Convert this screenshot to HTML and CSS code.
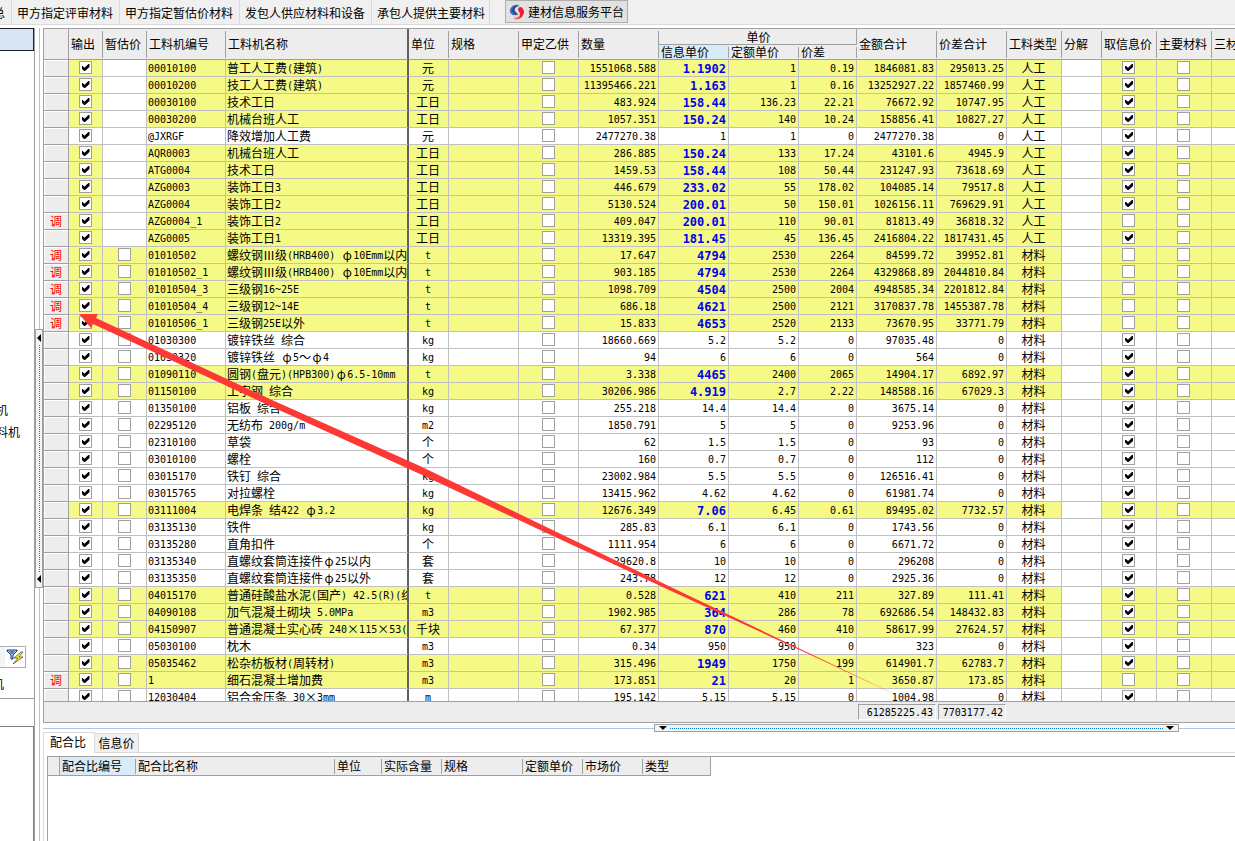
FILE: index.html
```html
<!DOCTYPE html>
<html lang="zh-CN">
<head>
<meta charset="utf-8">
<title>工料机汇总</title>
<link rel="stylesheet" href="styles.css">
</head>
<body>
<nav class="topbar">
  <a class="toptab toptab-first" href="#">总</a>
  <a class="toptab" href="#">甲方指定评审材料</a>
  <a class="toptab" href="#">甲方指定暂估价材料</a>
  <a class="toptab" href="#">发包人供应材料和设备</a>
  <a class="toptab toptab-last" href="#">承包人提供主要材料</a>
  <button class="platform" type="button">
    <svg width="16" height="18" viewBox="0 0 16 18" aria-hidden="true">
      <path d="M10 2C5 1 1 4 1 8C1 11 4 13 8 12C5 10 4 8 5 6C6 4 8 3 10 2Z" fill="#3a68b5"/>
      <path d="M11 3C7 3 5 6 6 8C7 10 9 10 9 12C6 12 4 10 3 8C3 5 6 2 11 3Z" fill="#274c98"/>
      <path d="M12 4C15 6 16 9 14 12C13 15 9 17 5 16C9 15 11 13 11 11C11 9 9 8 9 7C9 5 10 4 12 4Z" fill="#ee1c2c"/>
      <path d="M4 14C7 15 10 14 11 12C11 15 8 17 4 14Z" fill="#f58a86"/>
    </svg>
    建材信息服务平台
  </button>
</nav>
<div class="workspace">
  <aside class="side">
    <div class="side-tree">
      <div class="side-selected"></div>
      <ul class="side-list">
        <li>机</li>
        <li>料机</li>
      </ul>
      <div class="side-filter">
        <button class="filter" type="button" aria-label="筛选">
          <svg width="18" height="18" viewBox="0 0 18 18" aria-hidden="true">
            <path d="M1 2H11V3L7 7V11H5V7L1 3Z" fill="#b7d0ef" stroke="#18327c"/>
            <path d="M3 3H9L7 6H5Z" fill="#537dbd"/>
            <path d="M15 4 8 10 12 10 7 16 17 9 13 9 17 4Z" fill="#ffef00" stroke="#35405e" stroke-width=".7"/>
          </svg>
        </button>
      </div>
      <div class="side-tail">机</div>
    </div>
    <div class="side-detail"></div>
  </aside>
  <div class="vsplit">
    <span class="vline vline-top"></span>
    <button class="vgrip" type="button" aria-label="折叠左侧面板"><i class="left"></i><span></span><i class="left"></i></button>
    <span class="vline"></span>
  </div>
  <main class="main">
    <section class="grid">
      <div class="grid-view">
        <table class="sheet">
          <colgroup>
            <col class="w25"><col class="w34"><col class="w44"><col class="w79"><col class="w183"><col class="w40"><col class="w70"><col class="w60"><col class="w80"><col class="w70"><col class="w70"><col class="w58"><col class="w80"><col class="w70"><col class="w55"><col class="w40"><col class="w55"><col class="w55"><col class="w79">
          </colgroup>
          <thead>
            <tr class="h-top">
              <th rowspan="2" class="corner"></th>
              <th rowspan="2">输出</th><th rowspan="2">暂估价</th><th rowspan="2">工料机编号</th>
              <th rowspan="2" class="thick">工料机名称</th>
              <th rowspan="2">单位</th><th rowspan="2">规格</th><th rowspan="2">甲定乙供</th><th rowspan="2">数量</th>
              <th colspan="3" class="group">单价</th>
              <th rowspan="2">金额合计</th><th rowspan="2">价差合计</th><th rowspan="2">工料类型</th><th rowspan="2">分解</th>
              <th rowspan="2">取信息价</th><th rowspan="2">主要材料</th><th rowspan="2">三材类别</th>
            </tr>
            <tr class="h-sub"><th class="active">信息单价</th><th>定额单价</th><th>价差</th></tr>
          </thead>
          <tbody id="rows"></tbody>
        </table>
      </div>
      <div class="totals"><output>61285225.43</output><output class="narrow">7703177.42</output></div>
    </section>
    <div class="hsplit">
      <span class="hline hline-left"></span>
      <button class="hgrip" type="button" aria-label="折叠下方面板"><i class="down"></i><span></span><i class="down"></i></button>
      <span class="hline"></span>
    </div>
    <section class="lower">
      <div class="tabs" role="tablist">
        <button class="tab on" type="button" role="tab" aria-selected="true">配合比</button>
        <button class="tab" type="button" role="tab" aria-selected="false">信息价</button>
      </div>
      <div class="mix">
        <div class="mix-frame">
          <table class="mix-table">
            <colgroup><col class="w12"><col class="w76"><col class="w199"><col class="w47"><col class="w60"><col class="w81"><col class="w60"><col class="w60"><col class="w68"></colgroup>
            <thead><tr><th class="corner"></th><th class="active">配合比编号</th><th>配合比名称</th><th>单位</th><th>实际含量</th><th>规格</th><th>定额单价</th><th>市场价</th><th class="last">类型</th></tr></thead>
          </table>
        </div>
      </div>
    </section>
  </main>
</div>
<svg class="pointer" width="920" height="701" viewBox="0 0 920 701" aria-hidden="true">
  <defs><linearGradient id="fade" gradientUnits="userSpaceOnUse" x1="840" y1="670" x2="915" y2="704"><stop offset="0" stop-color="#fd3936"/><stop offset="1" stop-color="#fd3936" stop-opacity=".5"/></linearGradient></defs>
  <path d="M79 314 98 314 96 318 272 400 420 466 677 590 815 656 911 702 815 657 669 590 420 474 257 400 93 324 91 328Z" fill="url(#fade)"/>
</svg>
<script src="app.js"></script>
</body>
</html>
```
FILE: styles.css
```css
* { box-sizing: border-box; }
body {
  margin: 0;
  height: 100vh;
  display: flex;
  flex-direction: column;
  overflow: hidden;
  background: #fff;
  color: #000;
  font: 12px/16px "Noto Sans CJK SC", sans-serif;
}
button, input, output { font: inherit; color: inherit; }
button { padding: 0; margin: 0; }
table { border-collapse: separate; border-spacing: 0; table-layout: fixed; }
th { font-weight: 400; text-align: left; }

/* top tab bar */
.topbar {
  display: flex;
  flex: none;
  height: 25px;
  background: #f0f0f0;
  border-bottom: 1px solid #dcdcdc;
}
.toptab {
  padding: 5px 6px 0 5px;
  border-right: 1px solid #dadada;
  color: #000;
  text-decoration: none;
  white-space: nowrap;
}
.toptab-first { width: 12px; padding: 5px 6px 0 0; direction: rtl; overflow: hidden; }
.toptab-last { padding-right: 4px; }
.platform {
  display: flex;
  align-items: center;
  gap: 3px;
  height: 23px;
  margin-left: 15px;
  padding: 0 3px;
  border: 1px solid #adadad;
  background: #e1e1e1;
  white-space: nowrap;
}

.workspace { display: flex; flex: 1; min-height: 0; padding-top: 3px; }

/* left panel */
.side { flex: none; width: 35px; display: flex; flex-direction: column; border-right: 1px solid #a0a0a0; }
.side-tree { flex: 672 1 0; display: flex; flex-direction: column; border-bottom: 1px solid #a0a0a0; overflow: hidden; }
.side-selected { height: 23px; border: 1px solid #222; border-left: 0; background: #d8e6f3; }
.side-list { list-style: none; margin: 0; padding: 351px 0 0; flex: 1; }
.side-list li { height: 22px; margin-left: -4px; white-space: nowrap; }
.side-filter { width: 26px; height: 22px; border: 1px solid #adadad; border-left: 0; background: #f4f4f4; display: flex; justify-content: flex-end; align-items: center; }
.filter { width: 20px; height: 20px; border: 0; background: #fff; display: grid; place-items: center; }
.side-tail { height: 30px; padding-top: 8px; margin-left: -8px; }
.side-detail { flex: 114 1 0; margin-top: 27px; border-top: 1px solid #808080; border-right: 1px solid #808080; }

.vsplit { flex: none; width: 8px; display: flex; flex-direction: column; align-items: center; }
.vline { flex: 253; width: 1px; background: #a6c8f0; }
.vline-top { flex: 301; }
.vgrip {
  flex: 249; width: 8px; border: 1px solid #a0a0a0; background: #f4f4f4;
  display: flex; flex-direction: column; align-items: center; padding: 4px 0;
}
.vgrip span { flex: 1; margin: 3px 0; border-left: 1px dotted #0078d7; }
.left { border: 4px solid transparent; border-left: 0; border-right-color: #000; }

/* main grid */
.main { flex: 1; min-width: 0; display: flex; flex-direction: column; }
.grid { flex: 695 1 0; min-height: 0; display: flex; flex-direction: column; border: solid #a0a0a0; border-width: 1px 0 1px 1px; overflow: hidden; }
.grid-view { flex: 1; min-height: 0; overflow: hidden; }
.sheet { width: 1247px; }
.w25 { width: 25px; } .w34 { width: 34px; } .w44 { width: 44px; } .w79 { width: 79px; }
.w183 { width: 183px; } .w40 { width: 40px; } .w70 { width: 70px; } .w60 { width: 60px; }
.w80 { width: 80px; } .w58 { width: 58px; } .w55 { width: 55px; }
.w12 { width: 12px; } .w76 { width: 76px; } .w199 { width: 199px; } .w47 { width: 47px; }
.w81 { width: 81px; } .w68 { width: 68px; }

.sheet th, .mix-table th {
  padding: 0 0 0 2px;
  border-bottom: 1px solid #a0a0a0;
  background: linear-gradient(#a0a0a0, #a0a0a0) right 2px / 1px calc(100% - 3px) no-repeat #ededed;
  white-space: nowrap;
  overflow: hidden;
}
.sheet .h-top th { height: 16px; }
.sheet .h-sub th { height: 15px; line-height: 14px; }
.sheet th.corner, .mix-table th.corner { border-right: 1px solid #a0a0a0; background: #ededed; }
.sheet th.thick { border-right: 2px solid #606060; background: #ededed; }
.sheet th.group { line-height: 14px; text-align: center; border-right: 1px solid #a0a0a0; background: #ededed; }
.sheet th.active, .mix-table th.active { background-color: #d9ebf9; }

.sheet td {
  height: 17px;
  padding: 0 2px 0 1px;
  border: solid #c0c0c0;
  border-width: 0 1px 1px 0;
  line-height: 15px;
  vertical-align: top;
  white-space: nowrap;
  overflow: hidden;
}
.hot td { background: #f5f985; }
.sheet .mark { padding: 0; text-align: center; color: #f00; background: #ededed; border-color: #a0a0a0; box-shadow: inset 1px 1px #fff; }
.sheet .blank { background: #fff; }
.sheet .thick { border-right: 2px solid #606060; }
.num { text-align: right; }
.mid { text-align: center; }
.a { font: 10px/12px "DejaVu Sans Mono", monospace; vertical-align: 1px; }
.hot .info .a { font-size: 12px; font-weight: 700; color: #0000f0; vertical-align: baseline; }
.wide { display: inline-block; width: 12px; text-align: center; line-height: 12px; }

.sheet input {
  appearance: none;
  display: block;
  width: 13px;
  height: 13px;
  margin: 1px auto 0;
  border: 1px solid #a0a0a0;
  background: #fff;
}
.sheet input:checked::before {
  content: "";
  display: block;
  width: 8px;
  height: 7px;
  margin: 2px 0 0 2px;
  background: #000;
  clip-path: polygon(0 28%, 14% 28%, 38% 52%, 86% 0, 100% 0, 100% 42%, 44% 100%, 32% 100%, 0 66%);
}

.totals { flex: none; display: flex; gap: 2px; height: 21px; padding: 2px 0 2px 814px; border-top: 1px solid #a0a0a0; background: #ededed; }
.totals output {
  width: 78px;
  padding-right: 2px;
  border: 1px solid #fff;
  border-top-color: #a0a0a0;
  border-left-color: #a0a0a0;
  font: 10px/16px "DejaVu Sans Mono", monospace;
  text-align: right;
}
.totals .narrow { width: 68px; }

/* splitter between grid and lower panel */
.hsplit { flex: none; height: 9px; padding-top: 1px; display: flex; align-items: center; }
.hline { flex: 56; height: 1px; background: #a6c8f0; }
.hline-left { flex: 611; }
.hgrip { flex: 515; height: 8px; border: 1px solid #a0a0a0; background: #f4f4f4; display: flex; align-items: center; padding: 0 4px; }
.hgrip span { flex: 1; margin: 0 3px; border-top: 1px dotted #0078d7; }
.down { border: 4px solid transparent; border-bottom: 0; border-top-color: #000; }

/* lower panel */
.lower { flex: 109 1 0; display: flex; flex-direction: column; }
.tabs { flex: none; height: 21px; display: flex; align-items: flex-end; border-bottom: 1px solid #dadada; }
.tab { height: 19px; width: 44px; border: 1px solid #dadada; border-left: 0; border-bottom: 0; background: #f0f0f0; }
.tab.on { height: 21px; width: 52px; margin-bottom: -1px; border-left: 1px solid #dadada; background: #fff; padding: 0 2px 2px 0; }
.mix { flex: 1; display: flex; padding: 3px 0 0 4px; border-left: 1px solid #dadada; margin-top: 0; }
.mix-frame { flex: 1; min-width: 0; margin-left: -1px; border: solid #a0a0a0; border-width: 1px 0 0 1px; }
.mix-table { width: 663px; }
.mix-table th { height: 19px; }
.mix-table th.last { border-right: 1px solid #a0a0a0; background: #ededed; }

/* annotation arrow above the grid */
.pointer { position: absolute; left: 0; top: 0; pointer-events: none; }
```
FILE: app.js
```js
// mark | code | name | unit | quantity | info price | base price | difference | total | difference total | type
const data = `
|00010100|普工人工费(建筑)|元|1551068.588|1.1902|1|0.19|1846081.83|295013.25|人工
|00010200|技工人工费(建筑)|元|11395466.221|1.163|1|0.16|13252927.22|1857460.99|人工
|00030100|技术工日|工日|483.924|158.44|136.23|22.21|76672.92|10747.95|人工
|00030200|机械台班人工|工日|1057.351|150.24|140|10.24|158856.41|10827.27|人工
|@JXRGF|降效增加人工费|元|2477270.38|1|1|0|2477270.38|0|人工
|AQR0003|机械台班人工|工日|286.885|150.24|133|17.24|43101.6|4945.9|人工
|ATG0004|技术工日|工日|1459.53|158.44|108|50.44|231247.93|73618.69|人工
|AZG0003|装饰工日3|工日|446.679|233.02|55|178.02|104085.14|79517.8|人工
|AZG0004|装饰工日2|工日|5130.524|200.01|50|150.01|1026156.11|769629.91|人工
调|AZG0004_1|装饰工日2|工日|409.047|200.01|110|90.01|81813.49|36818.32|人工
|AZG0005|装饰工日1|工日|13319.395|181.45|45|136.45|2416804.22|1817431.45|人工
调|01010502|螺纹钢Ⅲ级(HRB400) φ10Emm以内|t|17.647|4794|2530|2264|84599.72|39952.81|材料
调|01010502_1|螺纹钢Ⅲ级(HRB400) φ10Emm以内|t|903.185|4794|2530|2264|4329868.89|2044810.84|材料
调|01010504_3|三级钢16~25E|t|1098.709|4504|2500|2004|4948585.34|2201812.84|材料
调|01010504_4|三级钢12~14E|t|686.18|4621|2500|2121|3170837.78|1455387.78|材料
调|01010506_1|三级钢25E以外|t|15.833|4653|2520|2133|73670.95|33771.79|材料
|01030300|镀锌铁丝 综合|kg|18660.669|5.2|5.2|0|97035.48|0|材料
|01030320|镀锌铁丝 φ5～φ4|kg|94|6|6|0|564|0|材料
|01090110|圆钢(盘元)(HPB300)φ6.5-10mm|t|3.338|4465|2400|2065|14904.17|6892.97|材料
|01150100|工字钢 综合|kg|30206.986|4.919|2.7|2.22|148588.16|67029.3|材料
|01350100|铝板 综合|kg|255.218|14.4|14.4|0|3675.14|0|材料
|02295120|无纺布 200g/m|m2|1850.791|5|5|0|9253.96|0|材料
|02310100|草袋|个|62|1.5|1.5|0|93|0|材料
|03010100|螺栓|个|160|0.7|0.7|0|112|0|材料
|03015170|铁钉 综合|kg|23002.984|5.5|5.5|0|126516.41|0|材料
|03015765|对拉螺栓|kg|13415.962|4.62|4.62|0|61981.74|0|材料
|03111004|电焊条 结422 φ3.2|kg|12676.349|7.06|6.45|0.61|89495.02|7732.57|材料
|03135130|铁件|kg|285.83|6.1|6.1|0|1743.56|0|材料
|03135280|直角扣件|个|1111.954|6|6|0|6671.72|0|材料
|03135340|直螺纹套筒连接件φ25以内|套|29620.8|10|10|0|296208|0|材料
|03135350|直螺纹套筒连接件φ25以外|套|243.78|12|12|0|2925.36|0|材料
|04015170|普通硅酸盐水泥(国产) 42.5(R)(综|t|0.528|621|410|211|327.89|111.41|材料
|04090108|加气混凝土砌块 5.0MPa|m3|1902.985|364|286|78|692686.54|148432.83|材料
|04150907|普通混凝土实心砖 240×115×53(|千块|67.377|870|460|410|58617.99|27624.57|材料
|05030100|枕木|m3|0.34|950|950|0|323|0|材料
|05035462|松杂枋板材(周转材)|m3|315.496|1949|1750|199|614901.7|62783.7|材料
调|1|细石混凝土增加费|m3|173.851|21|20|1|3650.87|173.85|材料
|12030404|铝合金压条 30×3mm|m|195.142|5.15|5.15|0|1004.98|0|材料`;

// Half-width runs and full-width symbols get their own classes.
const text = s => s
  .replace(/[ -~]+/g, m => `<span class="a">${m.replace(/ /g, "&nbsp;")}</span>`)
  .replace(/[φ×～Ⅲ]/g, m => `<span class="wide">${m}</span>`);
const box = (label, on) => `<input type="checkbox" aria-label="${label}"${on ? " checked" : ""}>`;

document.getElementById("rows").innerHTML = data.trim().split("\n").map(line => {
  const [mark, code, name, unit, qty, info, base, diff, total, diffTotal, kind] = line.split("|");
  const labor = kind === "人工";
  const num = v => `<td class="num">${text(v)}</td>`;
  return `<tr class="${diff !== "0" ? "hot" : ""}">
    <td class="mark">${mark}</td>
    <td>${box("输出 " + code, true)}</td>
    ${labor ? '<td class="blank"></td>' : `<td>${box("暂估价 " + code, false)}</td>`}
    <td>${text(code)}</td><td class="thick">${text(name)}</td>
    <td class="mid">${text(unit)}</td><td></td>
    <td>${box("甲定乙供 " + code, false)}</td>
    ${num(qty)}<td class="num info">${text(info)}</td>
    ${num(base)}${num(diff)}${num(total)}${num(diffTotal)}
    <td class="mid">${kind}</td><td class="blank"></td>
    <td>${box("取信息价 " + code, !mark)}</td>
    <td>${box("主要材料 " + code, false)}</td><td></td></tr>`;
}).join("");
```
